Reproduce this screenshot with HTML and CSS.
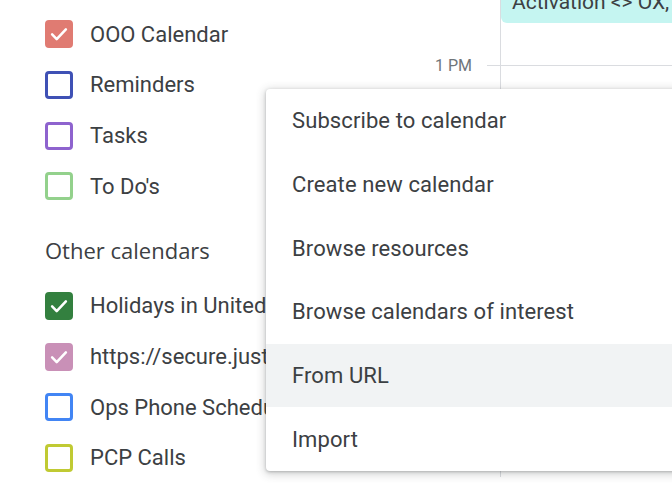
FILE: index.html
```html
<!DOCTYPE html>
<html lang="en">

<head>
    <meta charset="UTF-8">
    <meta name="viewport" content="width=device-width, initial-scale=1.0">
    <title>Calendar</title>
    <link rel="stylesheet" href="styles.css">
</head>

<body>
    <div class="page">
        <div class="sidebar">
            <ul class="cal-list">
                <li class="cal-item"><span class="box checked" style="--c: #e07b72"></span>OOO Calendar</li>
                <li class="cal-item"><span class="box" style="--c: #3f51b5"></span>Reminders</li>
                <li class="cal-item"><span class="box" style="--c: #8e63ce"></span>Tasks</li>
                <li class="cal-item"><span class="box" style="--c: #93d18c"></span>To Do's</li>
            </ul>

            <h3 class="section-title">Other calendars</h3>

            <ul class="cal-list">
                <li class="cal-item"><span class="box checked" style="--c: #33803f"></span>Holidays in United States</li>
                <li class="cal-item"><span class="box checked" style="--c: #c990b7"></span>https://secure.justworks.com</li>
                <li class="cal-item"><span class="box" style="--c: #4285f4"></span>Ops Phone Schedule</li>
                <li class="cal-item"><span class="box" style="--c: #c0ca33"></span>PCP Calls</li>
            </ul>
        </div>

        <div class="times">
            <div class="hour">
                <span class="hour-label">1 PM</span>
                <span class="tick"></span>
            </div>
        </div>

        <div class="grid">
            <div class="event"><span class="event-title">Activation &lt;&gt; OX, Team</span></div>
            <div class="hour-line"></div>
        </div>
    </div>

    <!-- Add calendar menu -->
    <ul class="menu">
        <li class="menu-item">Subscribe to calendar</li>
        <li class="menu-item">Create new calendar</li>
        <li class="menu-item">Browse resources</li>
        <li class="menu-item">Browse calendars of interest</li>
        <li class="menu-item active">From URL</li>
        <li class="menu-item">Import</li>
    </ul>

    <svg width="0" height="0" style="position:absolute">
        <defs>
            <symbol id="check" viewBox="0 0 24 24">
                <path d="M4.5 12.5l5 5L19.5 7" fill="none" stroke="#fff" stroke-width="2.8" stroke-linecap="round" stroke-linejoin="round" />
            </symbol>
        </defs>
    </svg>

    <script>
        document.querySelectorAll('.box.checked').forEach(function (box) {
            box.innerHTML = '<svg viewBox="0 0 24 24"><use href="#check"></use></svg>';
        });
    </script>
</body>

</html>
```

FILE: styles.css
```css
body {
    margin: 0;
    font-family: Roboto, "Liberation Sans", sans-serif;
    color: #3c4043;
    background-color: #fff;
    width: 672px;
    height: 488px;
    overflow: hidden;
    position: relative;
}

.page {
    display: flex;
    height: 488px;
}

/* Sidebar */
.sidebar {
    width: 400px;
    flex-shrink: 0;
    padding-left: 45px;
    padding-top: 9px;
    box-sizing: border-box;
    white-space: nowrap;
    overflow: hidden;
}

.cal-list {
    list-style: none;
    margin: 0;
    padding: 0;
}

.cal-item {
    display: flex;
    align-items: center;
    gap: 17px;
    height: 50.67px;
    font-size: 22px;
}

.box {
    width: 28px;
    height: 28px;
    box-sizing: border-box;
    border: 3px solid var(--c);
    border-radius: 4px;
    flex-shrink: 0;
    display: flex;
    align-items: center;
    justify-content: center;
}

.box.checked {
    background-color: var(--c);
}

.box svg {
    width: 24px;
    height: 24px;
}

.section-title {
    margin: 0;
    height: 69px;
    line-height: 77px;
    font-family: "Open Sans", Roboto, sans-serif;
    font-size: 22px;
    font-weight: 500;
}

/* Time column */
.times {
    width: 100px;
    flex-shrink: 0;
}

.hour {
    display: flex;
    align-items: center;
    justify-content: flex-end;
    margin-top: 54px;
    height: 22px;
}

.hour-label {
    font-size: 16px;
    color: #70757a;
    margin-right: 15px;
}

.tick {
    width: 13px;
    height: 1px;
    background-color: #dadce0;
}

/* Day grid */
.grid {
    flex: 1;
    min-width: 0;
    overflow: hidden;
    border-left: 1px solid #dadce0;
    height: 477px;
}

.event {
    height: 23px;
    background-color: #c5f5f1;
    border-bottom-left-radius: 6px;
    overflow: hidden;
    padding-left: 11px;
    white-space: nowrap;
}

.event-title {
    display: block;
    font-size: 21px;
    line-height: 20px;
    margin-top: -8px;
    color: #3c4043;
}

.hour-line {
    margin-top: 42px;
    height: 1px;
    background-color: #dadce0;
}

/* Menu */
.menu {
    position: absolute;
    left: 266px;
    top: 89px;
    width: 440px;
    margin: 0;
    padding: 0;
    list-style: none;
    background-color: #fff;
    border-radius: 4px;
    box-shadow: 0 2px 8px 2px rgba(60, 64, 67, 0.2), 0 1px 3px rgba(60, 64, 67, 0.3);
}

.menu-item {
    height: 63.7px;
    display: flex;
    align-items: center;
    padding-left: 26px;
    font-size: 22px;
    letter-spacing: 0.1px;
    color: #3c4043;
}

.menu-item.active {
    background-color: #f1f3f4;
}
```
